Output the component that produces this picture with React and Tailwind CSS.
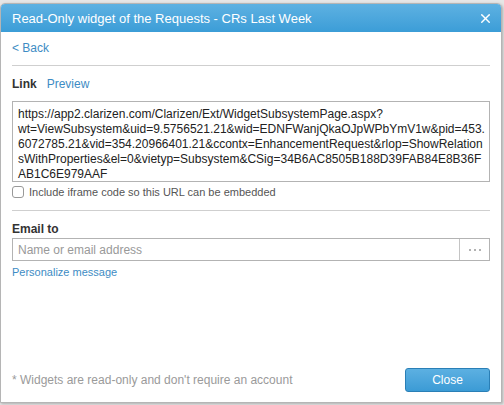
import React from "react";
import { X } from "lucide-react";

const urlLines = [
  "https://app2.clarizen.com/Clarizen/Ext/WidgetSubsystemPage.aspx?",
  "wt=ViewSubsystem&uid=9.5756521.21&wid=EDNFWanjQkaOJpWPbYmV1w&pid=453.",
  "6072785.21&vid=354.20966401.21&ccontx=EnhancementRequest&rlop=ShowRelation",
  "sWithProperties&el=0&vietyp=Subsystem&CSig=34B6AC8505B188D39FAB84E8B36F",
  "AB1C6E979AAF",
];

const App = () => {
  return (
    <div
      className="w-[504px] h-[405px] bg-[#e6e6e6] pt-[3px] flex"
      style={{ fontFamily: '"Liberation Sans", Arial, sans-serif' }}
    >
      <div className="w-[502px] h-[400px] bg-white border border-[#b5b5b5] rounded-t-[5px] flex flex-col overflow-hidden shadow-[1px_1px_3px_rgba(0,0,0,0.25)]">
        {/* ===== Header ===== */}
        <div className="h-[28px] shrink-0 bg-gradient-to-b from-[#5db1e2] to-[#3b9dd7] flex items-center justify-between pl-[11px] pr-[8px]">
          <span className="text-white text-[13px] leading-[15px]">
            Read-Only widget of the Requests - CRs Last Week
          </span>
          <X size={15} strokeWidth={2.2} className="text-white" />
        </div>

        <div className="flex flex-col flex-1 px-[11px] text-[12px] leading-[14px]">
          <div className="pt-[9px] pb-[10px] border-b border-[#cfcfcf]">
            <span className="text-[#3d8cc4]">&lt; Back</span>
          </div>

          {/* ===== Link ===== */}
          <div className="flex items-center gap-[10px] mt-[11px]">
            <span className="font-bold text-[#333]">Link</span>
            <span className="text-[#3d8cc4]">Preview</span>
          </div>
          <div className="mt-[10px] h-[81px] border border-[#b3b3b3] px-[5px] pt-[5px] leading-[15px] text-[#222] whitespace-nowrap">
            {urlLines.map((l) => (
              <div key={l}>{l}</div>
            ))}
          </div>
          <label className="flex items-center gap-[5px] mt-[3px] text-[11px] text-[#555]">
            <span className="w-[12px] h-[12px] border border-[#999] rounded-[3px] bg-white" />
            Include iframe code so this URL can be embedded
          </label>
          <div className="mt-[11px] border-b border-[#cfcfcf]" />

          {/* ===== Email ===== */}
          <div className="mt-[11px] font-bold text-[#333]">Email to</div>
          <div className="mt-[2px] h-[23px] flex border border-[#b3b3b3]">
            <div className="flex-1 flex items-center px-[5px] text-[#999]">
              Name or email address
            </div>
            <div className="w-[30px] border-l border-[#c4c4c4] flex items-center justify-center gap-[3px]">
              <span className="w-[2px] h-[2px] rounded-full bg-[#999]" />
              <span className="w-[2px] h-[2px] rounded-full bg-[#999]" />
              <span className="w-[2px] h-[2px] rounded-full bg-[#999]" />
            </div>
          </div>
          <div className="mt-[5px] text-[11px] leading-[13px] text-[#3d8cc4]">
            Personalize message
          </div>

          {/* ===== Footer ===== */}
          <div className="mt-auto mb-[10px] flex items-center justify-between">
            <span className="text-[#9a9a9a]">
              * Widgets are read-only and don't require an account
            </span>
            <button className="w-[85px] h-[24px] rounded-[3px] border border-[#2a7fb6] bg-gradient-to-b from-[#5cb0e2] to-[#3b9bd5] text-white">
              Close
            </button>
          </div>
        </div>
      </div>
    </div>
  );
};

export default App;
